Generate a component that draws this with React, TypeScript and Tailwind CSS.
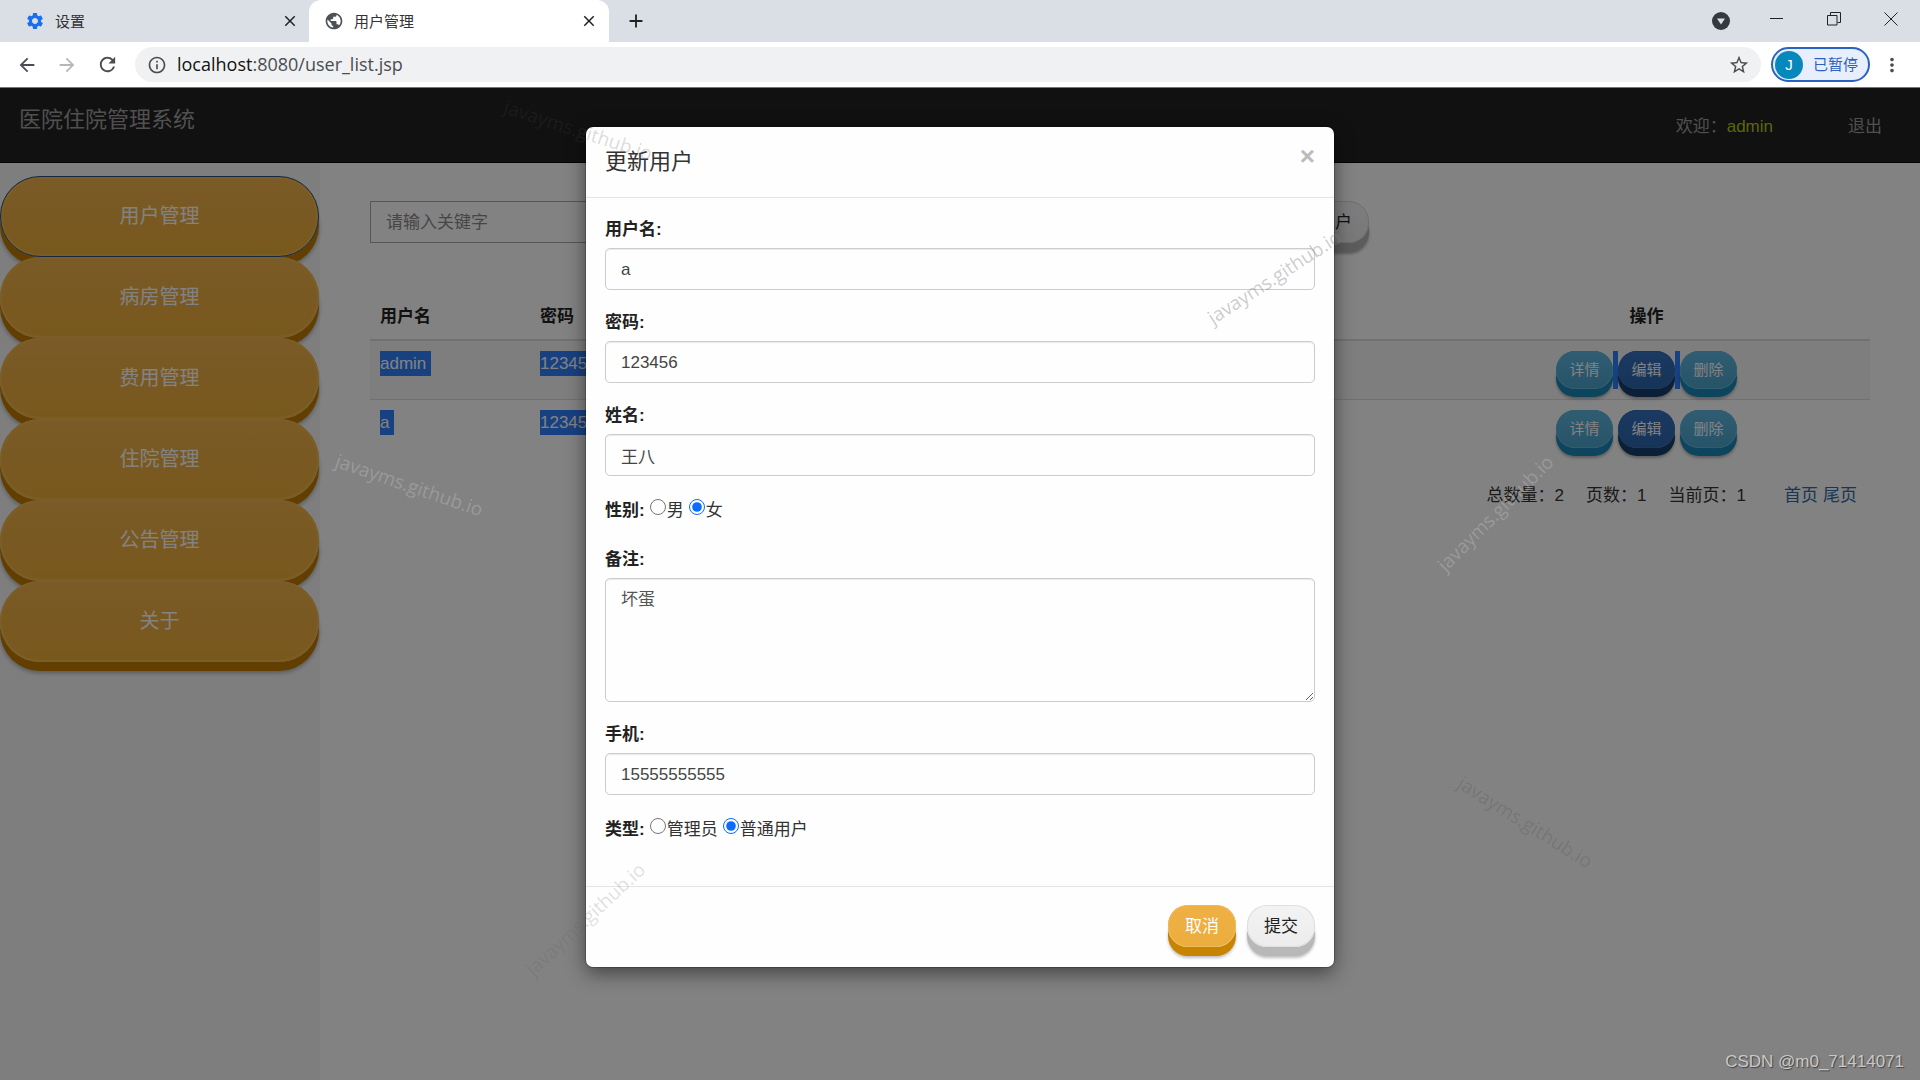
import { useState } from 'react'
import {
  MdAdd,
  MdArrowBack,
  MdArrowForward,
  MdClose,
  MdInfoOutline,
  MdMoreVert,
  MdPublic,
  MdRefresh,
  MdSettings,
  MdStarBorder,
} from 'react-icons/md'

interface User {
  name: string
  password: string
}

const menu = ['用户管理', '病房管理', '费用管理', '住院管理', '公告管理', '关于']

const users: User[] = [
  { name: 'admin', password: '123456' },
  { name: 'a', password: '123456' },
]

const watermarks = [
  'left-[501px] top-[28px] rotate-[18deg] text-[#484848]/20',
  'left-[1197px] top-[175px] rotate-[-33deg] text-[#808080]/40',
  'left-[332px] top-[383px] rotate-[19deg] text-white/20',
  'left-[1418px] top-[411px] rotate-[-45deg] text-white/20',
  'left-[508px] top-[817px] rotate-[-43deg] text-[#606060]/20',
  'left-[1448px] top-[720px] rotate-[32deg] text-black/10',
]

const actionStyles = {
  info: 'bg-linear-to-b from-[#5eb6e0] to-[#4ea4cc] shadow-[inset_0_0_0_1px_#60b4da,0_8px_0_#1a88bb,0_10px_3px_rgba(0,0,0,0.3)]',
  primary: 'bg-linear-to-b from-[#3672c0] to-[#2c66ac] shadow-[inset_0_0_0_1px_#336cb2,0_8px_0_#163e6c,0_10px_3px_rgba(0,0,0,0.3)]',
}

export default function App() {
  return (
    <div className="flex min-h-screen flex-col font-['Liberation_Sans','Noto_Sans_CJK_SC',sans-serif] text-[17px] leading-[25px] text-[#333]">
      <BrowserBar />
      <div className="relative flex flex-1 flex-col overflow-hidden bg-white">
        <Navbar />
        <div className="flex flex-1">
          <Sidebar />
          <UserList />
        </div>
        <UpdateUserModal />
        {watermarks.map((pos) => (
          <span
            key={pos}
            className={`pointer-events-none absolute font-['Open_Sans',sans-serif] text-[19px] leading-[28px] whitespace-nowrap ${pos}`}
          >
            javayms.github.io
          </span>
        ))}
        <span className="pointer-events-none absolute right-4 bottom-[6px] text-[17px] text-[#c8c8c8] [text-shadow:1px_1px_1px_#444]">
          CSDN @m0_71414071
        </span>
      </div>
    </div>
  )
}

// ── Browser ───────────────────────────────────────────────────────────────────
function BrowserBar() {
  return (
    <header className="border-b border-[#777] font-['Open_Sans','Noto_Sans_CJK_SC',sans-serif] text-[15px]">
      <div className="flex h-[42px] items-stretch bg-[#dadfe6] text-[#333]">
        <div className="flex w-[309px] items-center pr-[10px] pl-[25px]">
          <MdSettings className="mr-[10px] size-5 text-[#1a6ef0]" />
          <span className="flex-1">设置</span>
          <button aria-label="关闭标签" className="text-[#222]">
            <MdClose className="size-[18px]" />
          </button>
        </div>
        <div className="flex w-[300px] items-center rounded-t-xl bg-white pr-[11px] pl-[15px]">
          <MdPublic className="mr-[10px] size-5 text-[#4d5156]" />
          <span className="flex-1">用户管理</span>
          <button aria-label="关闭标签" className="text-[#222]">
            <MdClose className="size-[18px]" />
          </button>
        </div>
        <button aria-label="新标签页" className="ml-[16px] text-[#222]">
          <MdAdd className="size-[22px]" />
        </button>
        <div className="ml-auto flex items-center text-[#222]">
          <button aria-label="标签搜索" className="mr-[40px]">
            <svg viewBox="0 0 18 18" className="size-[18px]">
              <circle cx="9" cy="9" r="9" fill="#35393e" />
              <path d="M5 6.500h8L9 12.500z" fill="#dadfe6" />
            </svg>
          </button>
          <button aria-label="最小化" className="mr-[43px] pb-[5px]">
            <svg viewBox="0 0 14 14" className="size-[14px]">
              <path d="M0 6.500h13" stroke="currentColor" />
            </svg>
          </button>
          <button aria-label="还原" className="mr-[43px] pb-[5px]">
            <svg viewBox="0 0 14 14" className="size-[14px]" fill="none" stroke="currentColor">
              <path d="M.5 3.500h9.500v9.500h-9.500zM3.500 3.500v-3h10v10h-3" />
            </svg>
          </button>
          <button aria-label="关闭" className="mr-[22px] pb-[5px]">
            <svg viewBox="0 0 14 14" className="size-[14px]" fill="none" stroke="currentColor">
              <path d="M.5.5l13 13M13.500.5l-13 13" />
            </svg>
          </button>
        </div>
      </div>
      <div className="flex h-[45px] items-center bg-white pr-[17px] pl-[16px] text-[#4a4d51]">
        <button aria-label="后退" className="mr-[18px]">
          <MdArrowBack className="size-[22px]" />
        </button>
        <button aria-label="前进" className="mr-[18px] text-[#b5b7ba]">
          <MdArrowForward className="size-[22px]" />
        </button>
        <button aria-label="刷新" className="mr-[16px]">
          <MdRefresh className="size-[23px]" />
        </button>
        <div className="mr-[10px] flex h-[35px] flex-1 items-center rounded-full bg-[#f0f1f3] pr-[11px] pl-[12px]">
          <MdInfoOutline className="mr-[10px] size-5" />
          <div className="flex-1 text-[18px]">
            <span className="text-[#111]">localhost</span>:8080/user_list.jsp
          </div>
          <button aria-label="收藏">
            <MdStarBorder className="size-[22px]" />
          </button>
        </div>
        <button className="mr-[11px] flex h-[35px] w-[99px] items-center rounded-full border-2 border-[#2a62c4] bg-[#e8effc] pl-[2px] text-[#2f5fc0]">
          <span className="mr-[10px] flex size-7 items-center justify-center rounded-full bg-[#0788bd] font-['Liberation_Sans',sans-serif] text-white">
            J
          </span>
          已暂停
        </button>
        <button aria-label="菜单">
          <MdMoreVert className="size-[22px]" />
        </button>
      </div>
    </header>
  )
}

// ── Page ──────────────────────────────────────────────────────────────────────
function Navbar() {
  return (
    <nav className="flex h-[75px] items-start justify-between border-b border-[#080808] bg-[#222] px-[19px] text-[#9d9d9d]">
      <a href="#" className="pt-[19px] text-[22px]">
        医院住院管理系统
      </a>
      <div className="flex gap-[75px] pt-[26px] pr-[19px]">
        <span>
          欢迎：<span className="text-[#b4c81c]">admin</span>
        </span>
        <a href="#">退出</a>
      </div>
    </nav>
  )
}

function Sidebar() {
  return (
    <aside className="flex w-[320px] flex-col bg-[#f7f7f7] pt-[13px] pr-px">
      {menu.map((item, i) => (
        <button
          key={item}
          className={`h-[81px] rounded-[40px] bg-linear-to-b from-[#f0b04c] to-[#ecae38] text-[20px] text-white shadow-[inset_0_0_0_2px_#f2b750,0_9px_0_#c07c00,0_11px_4px_rgba(0,0,0,0.3)]
            ${i === 0 ? 'border border-[#2c4f7c]' : ''}
          `}
        >
          {item}
        </button>
      ))}
    </aside>
  )
}

function UserList() {
  return (
    <main className="flex-1 px-[50px] pt-[38px]">
      <form className="flex justify-between pr-[501px]">
        <input
          aria-label="关键字"
          placeholder="请输入关键字"
          className="h-[42px] w-[300px] border border-[#aaa] px-[15px] pt-[2px] placeholder:text-[#8a8a8a]"
        />
        <button
          type="button"
          className="h-[42px] rounded-[20px] border border-[#d8d8d8] bg-linear-to-b from-[#f6f6f6] to-[#ececec] px-[16px] text-[#222] shadow-[0_9px_0_#b4b4b4,0_11px_3px_rgba(0,0,0,0.3)]"
        >
          添加用户
        </button>
      </form>

      <table className="mt-[51px] w-full table-fixed">
        <colgroup>
          <col className="w-[160px]" />
          <col className="w-[160px]" />
          <col />
          <col className="w-[447px]" />
        </colgroup>
        <thead>
          <tr className="border-b-2 border-[#ddd] text-left text-[#222]">
            <th className="p-[10px] font-bold">用户名</th>
            <th className="p-[10px] font-bold">密码</th>
            <th />
            <th className="p-[10px] text-center font-bold">操作</th>
          </tr>
        </thead>
        <tbody>
          {users.map((user, i) => (
            <tr key={user.name} className={i === 0 ? 'border-b border-[#ddd] bg-[#f8f8f8]' : ''}>
              <td className="p-[10px] align-top">
                <Selected text={user.name} />
              </td>
              <td className="p-[10px] align-top">
                <Selected text={user.password} />
              </td>
              <td />
              <td className="p-[10px]">
                <div className="flex justify-center">
                  <ActionButton label="详情" kind="info" />
                  <span className={`w-[5px] ${i === 0 ? 'bg-[#2f80ff]' : ''}`} />
                  <ActionButton label="编辑" kind="primary" />
                  <span className={`w-[5px] ${i === 0 ? 'bg-[#2f80ff]' : ''}`} />
                  <ActionButton label="删除" kind="info" />
                </div>
              </td>
            </tr>
          ))}
        </tbody>
      </table>

      <div className="mt-[25px] flex justify-end pr-[13px]">
        <span className="mr-[22px]">总数量：2</span>
        <span className="mr-[22px]">页数：1</span>
        <span className="mr-[38px]">当前页：1</span>
        <a href="#" className="mr-[5px] text-[#2f6cac]">
          首页
        </a>
        <a href="#" className="text-[#2f6cac]">
          尾页
        </a>
      </div>
    </main>
  )
}

function Selected({ text }: { text: string }) {
  return <span className="inline-block bg-[#2f80ff] pr-[5px] text-white">{text}</span>
}

function ActionButton({ label, kind }: { label: string; kind: keyof typeof actionStyles }) {
  return (
    <button className={`h-[38px] w-[57px] rounded-[19px] pb-[2px] text-[15px] text-white ${actionStyles[kind]}`}>
      {label}
    </button>
  )
}

// ── Modal ─────────────────────────────────────────────────────────────────────
function UpdateUserModal() {
  const [gender, setGender] = useState('女')
  const [role, setRole] = useState('普通用户')

  return (
    <div className="absolute inset-0 flex items-start justify-center bg-black/49 pt-[39px]">
      <div
        role="dialog"
        aria-labelledby="modal-title"
        className="w-[748px] rounded-[7px] bg-[#fefefe] shadow-[0_6px_19px_rgba(0,0,0,0.5),0_0_0_1px_rgba(0,0,0,0.2)]"
      >
        <div className="flex h-[71px] items-start justify-between border-b border-[#e5e5e5] pt-[17px] pr-[19px] pl-[19px]">
          <h4 id="modal-title" className="pt-[5px] text-[22px]">
            更新用户
          </h4>
          <button aria-label="关闭" className="text-[26px] font-bold text-[#bbb]">
            ×
          </button>
        </div>

        <form className="px-[19px] pt-[19px] pb-[20px]">
          <TextField id="username" label="用户名:" value="a" />
          <TextField id="password" label="密码:" value="123456" />
          <TextField id="realname" label="姓名:" value="王八" />
          <RadioRow label="性别:" name="gender" options={['男', '女']} value={gender} onChange={setGender} />
          <div className="mb-[20px]">
            <label htmlFor="remark" className="mb-[6px] block font-bold text-[#222]">
              备注:
            </label>
            <textarea
              id="remark"
              defaultValue="坏蛋"
              className="block h-[124px] w-full rounded-[5px] border border-[#ccc] px-[15px] py-[8px] text-[#555] shadow-[inset_0_1px_1px_rgba(0,0,0,0.08)]"
            />
          </div>
          <TextField id="phone" label="手机:" value="15555555555" />
          <RadioRow label="类型:" name="role" options={['管理员', '普通用户']} value={role} onChange={setRole} />
        </form>

        <div className="flex justify-end gap-[11px] border-t border-[#e5e5e5] px-[19px] pt-[18px] pb-[20px]">
          <button className="h-[42px] w-[68px] rounded-[20px] bg-linear-to-b from-[#efb044] to-[#ebae3d] text-white shadow-[inset_0_0_0_1px_#eeb95a,0_9px_0_#c68400,0_11px_3px_rgba(0,0,0,0.25)]">
            取消
          </button>
          <button className="h-[42px] w-[68px] rounded-[20px] bg-linear-to-b from-[#f3f3f3] to-[#ececec] text-[#222] shadow-[inset_0_0_0_1px_#dfdfdf,0_9px_0_#b8b8b8,0_11px_3px_rgba(0,0,0,0.25)]">
            提交
          </button>
        </div>
      </div>
    </div>
  )
}

function TextField({ id, label, value }: { id: string; label: string; value: string }) {
  return (
    <div className="mb-[20px]">
      <label htmlFor={id} className="mb-[6px] block font-bold text-[#222]">
        {label}
      </label>
      <input
        id={id}
        defaultValue={value}
        className="block h-[42px] w-full rounded-[5px] border border-[#ccc] px-[15px] pt-px text-[#444] shadow-[inset_0_1px_1px_rgba(0,0,0,0.08)]"
      />
    </div>
  )
}

interface RadioRowProps {
  label: string
  name: string
  options: string[]
  value: string
  onChange: (value: string) => void
}

function RadioRow({ label, name, options, value, onChange }: RadioRowProps) {
  return (
    <div role="radiogroup" aria-label={label} className="mb-[20px] flex gap-[5px] pt-[2px] pb-[4px]">
      <span className="font-bold text-[#222]">{label}</span>
      {options.map((option) => (
        <label key={option} className="flex items-start">
          <input
            type="radio"
            name={name}
            checked={value === option}
            onChange={() => onChange(option)}
            className="mt-px mr-px size-4 accent-[#0b6cff]"
          />
          {option}
        </label>
      ))}
    </div>
  )
}
